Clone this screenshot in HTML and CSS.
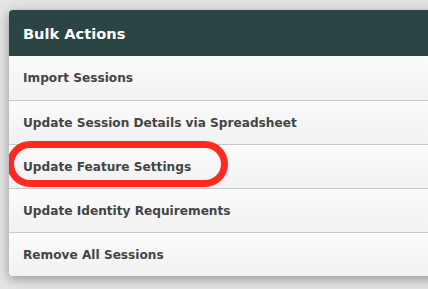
FILE: index.html
```html
<!DOCTYPE html>
<html lang="en">
<head>
  <meta charset="UTF-8" />
  <title>Bulk Actions</title>
  <link rel="stylesheet" href="styles.css">
</head>
<body>
  <div class="panel">
    <div class="panel-header">Bulk Actions</div>
    <ul class="actions">
      <li>Import Sessions</li>
      <li>Update Session Details via Spreadsheet</li>
      <li class="marked">Update Feature Settings<span class="ring"></span></li>
      <li>Update Identity Requirements</li>
      <li>Remove All Sessions</li>
    </ul>
  </div>
</body>
</html>
```

FILE: styles.css
```css
* {
  box-sizing: border-box;
}

html, body {
  margin: 0;
  padding: 0;
  width: 428px;
  height: 289px;
  overflow: hidden;
  background: #e4e4e4;
  font-family: "DejaVu Sans", sans-serif;
}

body {
  padding: 10px 0 0 9px;
}

.panel {
  width: 440px;
  border-radius: 4px;
  overflow: hidden;
  box-shadow: 0 3px 12px rgba(0, 0, 0, 0.35);
  background: #f6f6f6;
}

.panel-header {
  height: 46px;
  background: #2a4544;
  color: #fff;
  font-weight: bold;
  font-size: 14.6px;
  padding: 0 14px;
  display: flex;
  align-items: center;
}

.actions {
  list-style: none;
  margin: 0;
  padding: 0;
}

.actions li {
  position: relative;
  height: 44px;
  display: flex;
  align-items: center;
  padding: 0 14px;
  font-size: 12.15px;
  font-weight: bold;
  color: #444;
  background: linear-gradient(#fbfbfb, #f1f1f1);
  border-top: 1px solid #c9c9c9;
}

.actions li:first-child {
  border-top: none;
}

.ring {
  position: absolute;
  left: -2px;
  top: -4px;
  width: 221px;
  height: 46px;
  border: 7px solid #ff2a1f;
  border-radius: 23px;
}
```
